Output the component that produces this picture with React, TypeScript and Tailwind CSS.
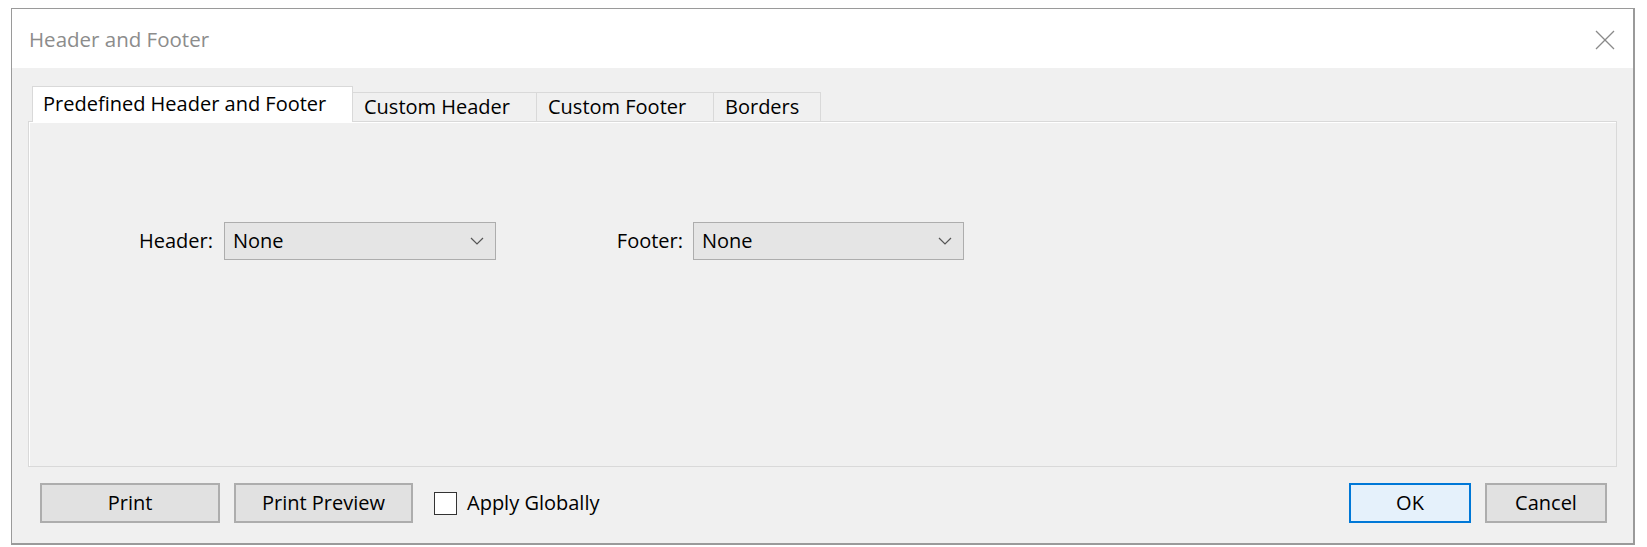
import React from "react";

const font = { fontFamily: '"Open Sans", "Noto Sans", "Liberation Sans", sans-serif' };

function Chevron(): React.JSX.Element {
  return (
    <svg width="14" height="8" viewBox="0 0 14 8" fill="none" className="shrink-0">
      <polyline points="1,1 7,7 13,1" stroke="#555" strokeWidth="1.2" />
    </svg>
  );
}

function Select({ width }: { width: string }): React.JSX.Element {
  return (
    <div
      className={`flex h-[38px] ${width} items-center justify-between border border-[#adadad] bg-[#e5e5e5] pl-[8px] pr-[11px] text-[20px] text-black`}
    >
      <span>None</span>
      <Chevron />
    </div>
  );
}

function Button({ label, width, primary }: { label: string; width: string; primary?: boolean }): React.JSX.Element {
  return (
    <button
      type="button"
      className={
        primary
          ? `flex h-[40px] ${width} items-center justify-center border-2 border-[#0078d7] bg-[#e5f1fb] text-[20px] text-black`
          : `flex h-[40px] ${width} items-center justify-center border-2 border-[#adadad] bg-[#e1e1e1] text-[20px] text-black`
      }
    >
      {label}
    </button>
  );
}

export default function App(): React.JSX.Element {
  const tabs = [
    { label: "Custom Header", width: "w-[184px]" },
    { label: "Custom Footer", width: "w-[177px]" },
    { label: "Borders", width: "w-[107px]" },
  ];

  return (
    <div className="h-[547px] w-[1647px] bg-white pl-[11px] pt-[8px]" style={font}>
      <div className="flex h-[537px] w-[1624px] flex-col border border-b-2 border-r-2 border-[#9a9a9a] bg-[#f0f0f0]">
        {/* title bar */}
        <div className="flex h-[59px] shrink-0 items-center justify-between bg-white pl-[17px] pr-[18px] pt-[2px]">
          <span className="text-[20.5px] text-[#8c8c8c]">Header and Footer</span>
          <svg width="20" height="20" viewBox="0 0 20 20" fill="none">
            <line x1="1" y1="1" x2="19" y2="19" stroke="#8a8a8a" strokeWidth="1.3" />
            <line x1="19" y1="1" x2="1" y2="19" stroke="#8a8a8a" strokeWidth="1.3" />
          </svg>
        </div>

        <div className="flex flex-1 flex-col pl-[16px] pr-[16px]">
          {/* tabs */}
          <div className="relative z-10 -mb-px ml-[4px] mt-[18px] flex items-end text-[20px] text-black">
            <div className="flex h-[36px] w-[321px] items-center border border-b-0 border-[#d9d9d9] bg-white pb-[2px] pl-[10px]">
              Predefined Header and Footer
            </div>
            {tabs.map((tab) => (
              <div
                key={tab.label}
                className={`flex h-[30px] ${tab.width} items-center border border-l-0 border-[#d9d9d9] bg-[#f0f0f0] pl-[11px]`}
              >
                {tab.label}
              </div>
            ))}
          </div>

          {/* panel */}
          <div className="h-[346px] border border-[#d9d9d9] shadow-[inset_1px_1px_0_#ffffff]">
            <div className="mt-[100px] flex items-center text-[20px] text-black">
              <span className="w-[195px] pr-[11px] text-right">Header:</span>
              <Select width="w-[272px]" />
              <span className="w-[197px] pr-[10px] text-right">Footer:</span>
              <Select width="w-[271px]" />
            </div>
          </div>

          {/* buttons */}
          <div className="mt-[16px] flex items-center pl-[12px] pr-[10px]">
            <Button label="Print" width="w-[180px]" />
            <div className="ml-[14px]">
              <Button label="Print Preview" width="w-[179px]" />
            </div>
            <div className="ml-[21px] h-[23px] w-[23px] border border-[#333] bg-white" />
            <span className="ml-[10px] text-[20px] text-black">Apply Globally</span>
            <div className="ml-auto flex gap-[14px]">
              <Button label="OK" width="w-[122px]" primary />
              <Button label="Cancel" width="w-[122px]" />
            </div>
          </div>
        </div>
      </div>
    </div>
  );
}
